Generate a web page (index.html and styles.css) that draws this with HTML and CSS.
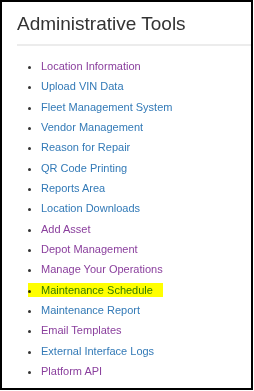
FILE: index.html
```html
<!DOCTYPE html>
<html lang="en">
<head>
    <meta charset="UTF-8">
    <meta name="viewport" content="width=device-width, initial-scale=1.0">
    <title>Administrative Tools</title>
    <link rel="stylesheet" href="styles.css">
</head>
<body>
    <div class="tools-panel">
        <h2>Administrative Tools</h2>

        <!-- Tool links -->
        <ul class="tools-list">
            <li><a href="#" class="visited">Location Information</a></li>
            <li><a href="#">Upload VIN Data</a></li>
            <li><a href="#">Fleet Management System</a></li>
            <li><a href="#">Vendor Management</a></li>
            <li><a href="#">Reason for Repair</a></li>
            <li><a href="#">QR Code Printing</a></li>
            <li><a href="#">Reports Area</a></li>
            <li><a href="#">Location Downloads</a></li>
            <li><a href="#" class="visited">Add Asset</a></li>
            <li><a href="#" class="visited">Depot Management</a></li>
            <li><a href="#" class="visited">Manage Your Operations</a></li>
            <li class="highlight"><a href="#">Maintenance Schedule</a></li>
            <li><a href="#">Maintenance Report</a></li>
            <li><a href="#" class="visited">Email Templates</a></li>
            <li><a href="#">External Interface Logs</a></li>
            <li><a href="#" class="visited">Platform API</a></li>
        </ul>
    </div>
</body>
</html>
```

FILE: styles.css
```css
body {
    margin: 0;
    background: white;
    font-family: "Liberation Sans", Arial, sans-serif;
}

.tools-panel {
    width: 253px;
    height: 390px;
    box-sizing: border-box;
    border: 2px solid #000;
    padding: 11px 0 0 15px;
}

.tools-panel h2 {
    margin: 0;
    padding-bottom: 10px;
    border-bottom: 2px solid #ececec;
    font-size: 19px;
    line-height: 21px;
    font-weight: normal;
    color: #333;
}

.tools-list {
    margin: 10px 0 0;
    padding-left: 24px;
    font-size: 11px;
    color: #333;
}

.tools-list li {
    position: relative;
    line-height: 20.33px;
}

.tools-list a {
    color: #337ab7;
    text-decoration: none;
}

.tools-list a.visited {
    color: #8a3f9d;
}

.highlight::after {
    content: "";
    position: absolute;
    left: -13px;
    top: 3px;
    width: 135px;
    height: 14px;
    background: #ffff00;
    mix-blend-mode: multiply;
}
```
